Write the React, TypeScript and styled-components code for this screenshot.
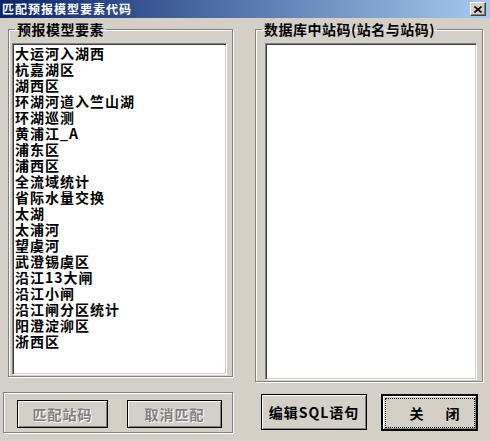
import styled, { createGlobalStyle } from 'styled-components';

const GlobalStyle = createGlobalStyle`
  body {
    margin: 0;
    background: #d4d0c8;
  }
  * {
    box-sizing: border-box;
  }
`;

const FONT = `"Noto Sans CJK SC", "Liberation Sans", sans-serif`;

const Window = styled.div`
  width: 490px;
  height: 441px;
  background: #d4d0c8;
  font-family: ${FONT};
  display: flex;
  flex-direction: column;
  overflow: hidden;
`;

const TitleBar = styled.div`
  height: 18px;
  flex: none;
  display: flex;
  align-items: center;
  justify-content: space-between;
  padding: 0 4px 0 2px;
  background: linear-gradient(to right, #0a246a, #a6caf0);
  color: #fff;
  font-size: 12px;
  font-weight: bold;
  letter-spacing: 1px;
  line-height: 14px;
`;

const CloseBox = styled.div`
  width: 16px;
  height: 14px;
  background: #d4d0c8;
  border: 1px solid;
  border-color: #fff #404040 #404040 #fff;
  box-shadow: inset -1px -1px 0 #808080;
  display: flex;
  align-items: center;
  justify-content: center;
`;

const Body = styled.div`
  display: flex;
  padding: 3px 0 0 3px;
`;

const Column = styled.div<{ $w: number; $ml: number }>`
  display: flex;
  flex-direction: column;
  width: ${(p) => p.$w}px;
  margin-left: ${(p) => p.$ml}px;
`;

const GroupBox = styled.fieldset<{ $w: number; $h: number; $ml: number }>`
  margin: 0 0 0 ${(p) => p.$ml}px;
  padding: 6px 0 0 0;
  min-width: 0;
  width: ${(p) => p.$w}px;
  height: ${(p) => p.$h}px;
  border: 1px solid #808080;
  box-shadow: inset 1px 1px 0 #fff, 1px 1px 0 #fff;
`;

const Legend = styled.legend`
  margin-left: 6px;
  padding: 0 2px;
  font-size: 14px;
  font-weight: bold;
  line-height: 16px;
  letter-spacing: 0.5px;
  color: #000;
`;

const ListBox = styled.div<{ $w: number; $h: number; $ml: number }>`
  width: ${(p) => p.$w}px;
  height: ${(p) => p.$h}px;
  margin-left: ${(p) => p.$ml}px;
  background: #fff;
  border: 1px solid;
  border-color: #808080 #fff #fff #808080;
  box-shadow: inset 1px 1px 0 #404040, inset -1px -1px 0 #d4d0c8;
  padding: 1px 2px;
  overflow: hidden;
`;

const Item = styled.div`
  font-size: 14px;
  font-weight: bold;
  line-height: 16px;
  height: 16px;
  letter-spacing: 1px;
  white-space: nowrap;
  color: #000;
`;

const Frame = styled.div`
  width: 230px;
  height: 41px;
  margin-top: 15px;
  border: 1px solid #808080;
  box-shadow: inset 1px 1px 0 #fff, 1px 1px 0 #fff;
  display: flex;
  align-items: flex-start;
  gap: 19px;
  padding: 7px 0 0 13px;
`;

const ButtonRow = styled.div`
  display: flex;
  gap: 14px;
  padding-left: 6px;
  margin-top: 12px;
`;

const Button = styled.button<{ $w: number; $h: number; $default?: boolean }>`
  width: ${(p) => p.$w}px;
  height: ${(p) => p.$h}px;
  padding: 0;
  background: #d4d0c8;
  border: ${(p) => (p.$default ? 2 : 1)}px solid #000;
  box-shadow: inset 1px 1px 0 #fff, inset -1px -1px 0 #808080;
  font-family: ${FONT};
  font-size: 14px;
  font-weight: bold;
  letter-spacing: 1px;
  color: #000;
  display: flex;
  align-items: center;
  justify-content: center;

  &:disabled {
    color: #808080;
    text-shadow: 1px 1px 0 #fff;
  }
`;

const FocusRing = styled.span`
  flex: 1;
  align-self: stretch;
  margin: 2px 1px 1px 2px;
  border: 1px dotted #000;
  display: flex;
  align-items: center;
  justify-content: center;
  padding-left: 10px;
  word-spacing: 17px;
`;

const elements = [
  '大运河入湖西',
  '杭嘉湖区',
  '湖西区',
  '环湖河道入竺山湖',
  '环湖巡测',
  '黄浦江_A',
  '浦东区',
  '浦西区',
  '全流域统计',
  '省际水量交换',
  '太湖',
  '太浦河',
  '望虞河',
  '武澄锡虞区',
  '沿江13大闸',
  '沿江小闸',
  '沿江闸分区统计',
  '阳澄淀泖区',
  '浙西区',
];

export default function App() {
  return (
    <>
      <GlobalStyle />
      <Window>
        <TitleBar>
          <span>匹配预报模型要素代码</span>
          <CloseBox>
            <svg width="8" height="7" viewBox="0 0 8 7">
              <path d="M0.5 0.5 L7.5 6.5 M7.5 0.5 L0.5 6.5" stroke="#000" strokeWidth="1.6" />
            </svg>
          </CloseBox>
        </TitleBar>
        <Body>
          <Column $w={231} $ml={0}>
            <GroupBox $w={225} $h={356} $ml={5}>
              <Legend>预报模型要素</Legend>
              <ListBox $w={215} $h={332} $ml={3}>
                {elements.map((e) => (
                  <Item key={e}>{e}</Item>
                ))}
              </ListBox>
            </GroupBox>
            <Frame>
              <Button $w={91} $h={28} disabled>
                匹配站码
              </Button>
              <Button $w={95} $h={28} disabled>
                取消匹配
              </Button>
            </Frame>
          </Column>
          <Column $w={229} $ml={21}>
            <GroupBox $w={228} $h={361} $ml={0}>
              <Legend>数据库中站码(站名与站码)</Legend>
              <ListBox $w={212} $h={337} $ml={9} />
            </GroupBox>
            <ButtonRow>
              <Button $w={106} $h={36}>编辑SQL语句</Button>
              <Button $w={97} $h={37} $default>
                <FocusRing>关 闭</FocusRing>
              </Button>
            </ButtonRow>
          </Column>
        </Body>
      </Window>
    </>
  );
}
